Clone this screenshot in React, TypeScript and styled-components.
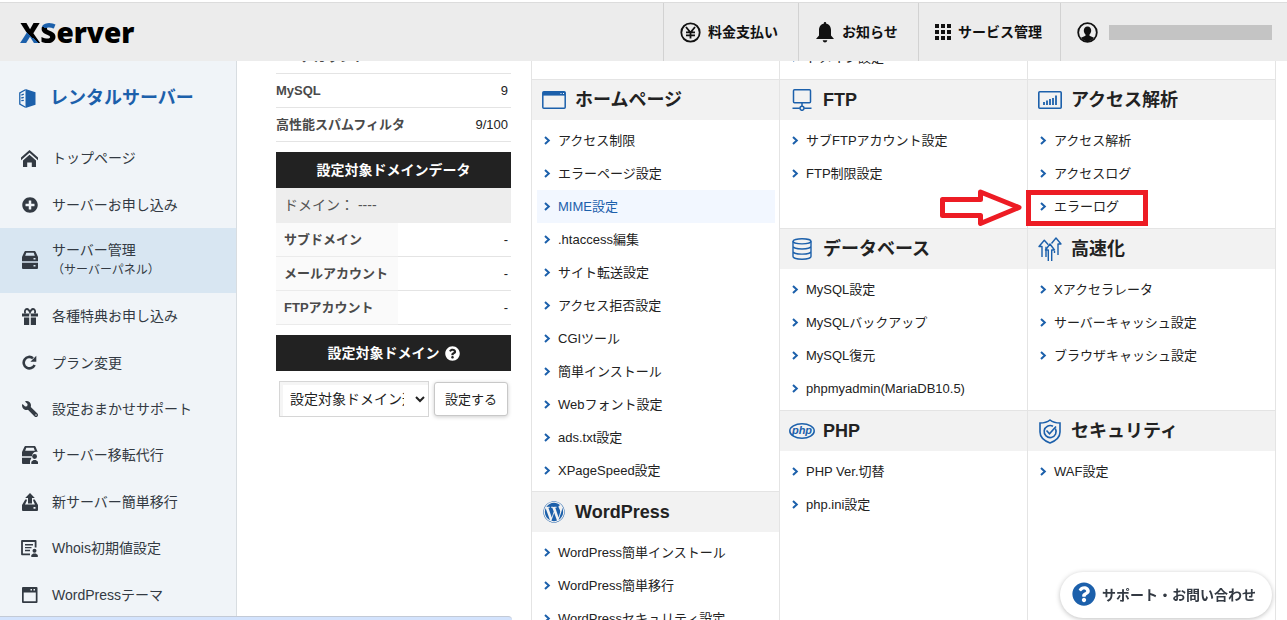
import React from "react";
import styled, { createGlobalStyle } from "styled-components";
import { FaPlusCircle, FaQuestionCircle, FaWordpress, FaWrench } from "react-icons/fa";

const blue = "#1c60ab";
const ink = "#222222";
const navInk = "#333a43";
const line = "#e4e4e4";

const GlobalStyle = createGlobalStyle`
  *, *::before, *::after { box-sizing: border-box; }
  body {
    margin: 0;
    background: #fff;
    color: ${ink};
    font-family: "Liberation Sans", "Noto Sans CJK JP", sans-serif;
    font-size: 13px;
    line-height: 20px;
  }
  a { color: inherit; text-decoration: none; }
  ul { margin: 0; padding: 0; list-style: none; }
  h2, h3 { margin: 0; }
  svg { display: block; flex: none; }
`;

const Page = styled.div`
  display: flex;
  flex-direction: column;
  height: 100vh;
  overflow: hidden;
  padding-top: 2px;
`;

/* ---------- header ---------- */

const Header = styled.header`
  flex: none;
  display: flex;
  justify-content: space-between;
  height: 59px;
  border-top: 1px solid #dcdcdc;
  background: #ececec;
`;

const Logo = styled.a`
  display: flex;
  align-items: center;
  padding-left: 20px;
  color: #000;
  font-family: "Open Sans", sans-serif;
  font-size: 28px;
  font-weight: 800;
  line-height: 40px;
`;

const LogoTint = styled.span<{ $from: string; $to: string }>`
  background: linear-gradient(${(p) => p.$from}, ${blue} ${(p) => p.$to}, #000 ${(p) => p.$to});
  background-clip: text;
  -webkit-background-clip: text;
  color: transparent;
`;

const HeaderNav = styled.nav`
  display: flex;
`;

const HeaderItem = styled.a<{ $width: number }>`
  display: flex;
  align-items: center;
  gap: 7px;
  width: ${(p) => p.$width}px;
  padding: 0 15px 0 16px;
  border-left: 1px solid #d2d2d2;
  color: #111;
  font-size: 14px;
  font-weight: 700;
  white-space: nowrap;
`;

const UserName = styled.span`
  flex: 1;
  height: 15px;
  margin-left: 4px;
  background: #c4c4c4;
`;

/* ---------- sidebar ---------- */

const Body = styled.div`
  flex: 1;
  display: flex;
  min-height: 0;
`;

const Sidebar = styled.aside`
  flex: none;
  display: flex;
  flex-direction: column;
  width: 237px;
  padding-bottom: 2px;
  border-right: 1px solid #d8dde1;
  background: #f0f4f8;
  color: ${navInk};
`;

const SidebarTitle = styled.h2`
  flex: none;
  display: flex;
  align-items: center;
  gap: 14px;
  height: 74px;
  padding-left: 19px;
  color: ${blue};
  font-size: 18px;
  line-height: 24px;
`;

const NavList = styled.ul`
  flex: 1;
  display: flex;
  flex-direction: column;
`;

const NavItem = styled.li<{ $active?: boolean }>`
  flex: ${(p) => (p.$active ? "none" : "1 0 40px")};
  display: flex;
  height: ${(p) => (p.$active ? "65px" : "auto")};
  max-height: 65px;
  background: ${(p) => (p.$active ? "#d8e6f2" : "transparent")};
`;

const NavLink = styled.a`
  flex: 1;
  display: flex;
  align-items: center;
  gap: 14px;
  padding-left: 21px;
  font-size: 14px;
`;

const NavIcon = styled.span`
  display: flex;
  justify-content: center;
  width: 17px;
`;

const NavNote = styled.small`
  display: block;
  font-size: 12px;
`;

/* ---------- main ---------- */

const Main = styled.main`
  flex: 1;
  min-width: 0;
  overflow: hidden;
`;

const Scrolled = styled.div`
  display: flex;
  align-items: flex-start;
  gap: 20px;
  margin-top: -24px;
  padding: 0 11px 0 39px;
`;

const Stats = styled.section`
  flex: none;
  width: 235px;
  padding-top: 3px;
`;

const DataTable = styled.table`
  width: 100%;
  border-collapse: separate;
  border-spacing: 0;
`;

const LabelCell = styled.th<{ $shaded?: boolean }>`
  width: ${(p) => (p.$shaded ? "122px" : "auto")};
  height: 34px;
  padding: 0 0 0 ${(p) => (p.$shaded ? 8 : 0)}px;
  border-bottom: 1px solid ${(p) => (p.$shaded ? "#ebebeb" : line)};
  background: ${(p) => (p.$shaded ? "#fafafa" : "#fff")};
  color: #4a4a4a;
  text-align: left;
  white-space: nowrap;
`;

const ValueCell = styled.td`
  padding: 0 3px 0 0;
  border-bottom: 1px solid ${line};
  text-align: right;
`;

const DarkTitle = styled.h3`
  display: flex;
  align-items: center;
  justify-content: center;
  gap: 5px;
  height: 36px;
  margin-top: 10px;
  background: #222;
  color: #fff;
  font-size: 14px;
`;

const DomainRow = styled.div`
  padding: 7px 8px 8px;
  background: #ededed;
  color: #555;
  font-size: 14px;
`;

const DomainForm = styled.form`
  display: flex;
  align-items: center;
  gap: 5px;
  padding: 10px 3px;
`;

const SelectWrap = styled.label`
  flex: 1;
  display: grid;
  align-items: center;
  & > * { grid-area: 1 / 1; }
  & > svg { justify-self: end; margin-right: 4px; pointer-events: none; }
`;

const DomainSelect = styled.select`
  appearance: none;
  width: 100%;
  height: 36px;
  padding: 0 24px 0 10px;
  border: 1px solid #d6d6d6;
  border-radius: 0;
  background: #fff;
  box-shadow: inset 3px 3px 0 #f5f5f5;
  color: ${ink};
  font-family: inherit;
  font-size: 14px;
`;

const SubmitButton = styled.button`
  width: 74px;
  height: 34px;
  padding: 0 0 2px;
  border: 1px solid #c8c8c8;
  border-radius: 3px;
  background: #fff;
  box-shadow: 0 1px 4px rgba(0, 0, 0, 0.2);
  color: ${ink};
  font-family: inherit;
  font-size: 13px;
`;

const Panel = styled.div`
  flex: 1;
  display: flex;
  min-width: 0;
  border-right: 1px solid ${line};
`;

const PairGrid = styled.div`
  flex: 2;
  display: grid;
  grid-template-columns: 1fr 1fr;
  grid-template-rows: auto auto auto 1fr;
  min-width: 0;
`;

const Section = styled.section`
  border-left: 1px solid ${line};
  border-bottom: 1px solid ${line};
`;

const SectionTitle = styled.h3`
  display: flex;
  align-items: center;
  gap: 8px;
  height: 40px;
  padding-left: 9px;
  background: #f2f2f2;
  font-size: 18px;
  line-height: 24px;
  white-space: nowrap;
`;

const SectionIcon = styled.span`
  display: flex;
  justify-content: center;
  width: 26px;
  color: ${blue};
`;

const LinkList = styled.ul`
  min-height: 42px;
  padding: 4px 4px 5px 5px;
`;

const Column = styled.div`
  flex: 1;
  min-width: 0;
  ${LinkList} { padding-bottom: 4px; }
`;

const LinkItem = styled.li`
  position: relative;
`;

const MenuLink = styled.a<{ $active?: boolean }>`
  display: flex;
  align-items: center;
  gap: 7px;
  height: 33px;
  padding-left: 7px;
  background: ${(p) => (p.$active ? "#f2f7ff" : "transparent")};
  color: ${(p) => (p.$active ? blue : ink)};
  white-space: nowrap;
`;

/* ---------- overlays ---------- */

const Highlight = styled.span`
  position: absolute;
  top: 0;
  left: -7px;
  width: 122px;
  height: 36px;
  border: 5px solid #ed1c24;
  pointer-events: none;
`;

const Arrow = styled.svg`
  position: absolute;
  top: -1px;
  left: -93px;
  pointer-events: none;
`;

const SupportButton = styled.button`
  position: fixed;
  right: 15px;
  bottom: 2px;
  display: flex;
  align-items: center;
  gap: 6px;
  height: 46px;
  padding: 0 16px 2px 12px;
  border: 0;
  border-radius: 23px;
  background: #fff;
  box-shadow: 0 1px 5px rgba(0, 0, 0, 0.25);
  color: ${navInk};
  font-family: inherit;
  font-size: 14px;
  font-weight: 700;
  white-space: nowrap;
`;

const StatusBar = styled.div`
  position: fixed;
  bottom: 0;
  left: 0;
  width: 512px;
  height: 4px;
  border-top: 1px solid #c3cad6;
  border-top-right-radius: 4px;
  background: #d3e3fd;
`;

/* ---------- icons ---------- */

const Chevron = () => (
  <svg width="7" height="9" viewBox="0 0 7 9" fill="none" stroke={blue} strokeWidth="2">
    <path d="M1 1l3.8 3.5L1 8" />
  </svg>
);

const YenIcon = () => (
  <svg width="21" height="21" viewBox="0 0 21 21" fill="none" stroke="#111" strokeWidth="1.8">
    <circle cx="10.5" cy="10.5" r="9.2" />
    <path d="M6 5l4.5 5.5L15 5M10.5 10v6.500M6 10.300h9M6 13.300h9" />
  </svg>
);

const BellIcon = () => (
  <svg width="20" height="21" viewBox="-1 0 20 21" fill="#111">
    <path d="M9 0c.9 0 1.3.7 1.3 1.700C13.600 2.300 15 5 15 8v5.500l3 3.500H0l3-3.500V8c0-3 1.400-5.700 4.700-6.300C7.700.7 8.100 0 9 0zM6.700 18.300h4.600c-.3 1.400-1.200 2.200-2.300 2.200s-2-.8-2.300-2.200z" />
  </svg>
);

const AppsIcon = () => (
  <svg width="16" height="16" viewBox="0 0 16 16" fill="#111">
    {[0, 6, 12].map((y) => [0, 6, 12].map((x) => <rect key={`${x}-${y}`} x={x} y={y} width="4" height="4" />))}
  </svg>
);

const UserIcon = () => (
  <svg width="21" height="21" viewBox="0 0 21 21">
    <circle cx="10.500" cy="10.500" r="9.300" fill="none" stroke="#111" strokeWidth="1.800" />
    <path fill="#111" d="M10.500 4.500c2.400 0 3.700 1.700 3.700 4 0 1.800-.8 3.200-1.700 4v1.300l4.500 2c-1.600 2.200-3.900 3.400-6.500 3.400S5.600 18 4 15.800l4.500-2v-1.300c-.9-.8-1.700-2.200-1.700-4 0-2.300 1.300-4 3.700-4z" />
  </svg>
);

const RentalIcon = () => (
  <svg width="17" height="19" viewBox="0 0 17 19">
    <path fill={blue} d="M6.500 0L16.500 3.300v12.400L6.500 19z" />
    <path fill="none" stroke={blue} strokeWidth="1.300" d="M6.500 .8L.8 4v11l5.700 3.200" />
    <path fill="none" stroke={blue} strokeWidth="1.300" d="M2.300 6.200l2.500-1M2.300 9l2.500-.7M2.300 11.600l2.500-.3" />
  </svg>
);

const HomeIcon = () => (
  <svg width="17" height="17" viewBox="0 0 17 17" fill={navInk}>
    <path d="M8.500 0L17 7.500v2.700L8.500 2.800 0 10.200V7.500z" />
    <path d="M8.500 4.800L15 10.500V17h-4.200v-4.500H6.200V17H2v-6.500z" />
  </svg>
);

const ServerIcon = () => (
  <svg width="16" height="18" viewBox="0 0 16 18" fill={navInk}>
    <path fillRule="evenodd" d="M4 0h8c1 0 1.500.4 1.800 1.200L16 6v4.300H0V6l2.200-4.800C2.500.4 3 0 4 0zm.3 1.700L3.200 4.700h9.600l-1.100-3zM11.500 7v1.500h2V7z" />
    <path fillRule="evenodd" d="M0 11.700h16V17a1 1 0 0 1-1 1H1a1 1 0 0 1-1-1zm11.500 2.300v1.600h2V14z" />
  </svg>
);

const GiftIcon = () => (
  <svg width="16" height="17" viewBox="0 0 16 17" fill={navInk}>
    <path d="M2 9.500h5.200V17H2zM8.800 9.500H14V17H8.800zM0 5.500h7.200V8.500H0zM8.800 5.500H16V8.500H8.800z" />
    <path fill="none" stroke={navInk} strokeWidth="1.800" d="M3.200 5.500C2.300 2.500 3.500.9 5 1c1.500.2 2.400 1.700 3 3.300C8.600 2.700 9.500 1.200 11 1c1.500-.1 2.700 1.500 1.800 4.500" />
  </svg>
);

const ReloadIcon = () => (
  <svg width="15" height="15" viewBox="0 0 15 15">
    <path fill="none" stroke={navInk} strokeWidth="2.600" d="M12.600 10A5.700 5.700 0 1 1 11 3.200" />
    <path fill={navInk} d="M14.300.8v5.900H8.400z" />
  </svg>
);

const ServerUserIcon = () => (
  <svg width="16" height="18" viewBox="0 0 16 18" fill={navInk}>
    <path fillRule="evenodd" d="M4 0h8c1 0 1.500.4 1.800 1.200L15.700 6c-3-.8-5.400.8-5.700 4.300H0V6l2.200-4.800C2.500.4 3 0 4 0zm.3 1.700L3.200 4.700h9.600l-1.100-3z" />
    <path d="M0 11.700h9.500L8 15v3H1a1 1 0 0 1-1-1z" />
    <circle cx="12.600" cy="10.500" r="2.400" />
    <path d="M9.300 18v-2.200l2.200-1.800h2.300l2.200 1.800V18z" />
  </svg>
);

const UploadIcon = () => (
  <svg width="16" height="18" viewBox="0 0 16 18" fill={navInk}>
    <path d="M8 0l4.800 5H10v5.500H6V5H3.200z" />
    <path d="M3.300 6.500h1.500v1.300L3 11.500h10l-1.800-3.700V6.500h1.500L16 12H0z" />
    <path fillRule="evenodd" d="M0 12h16v5a1 1 0 0 1-1 1H1a1 1 0 0 1-1-1zm11.500 2v1.800h2V14z" />
  </svg>
);

const WhoisIcon = () => (
  <svg width="17" height="17" viewBox="0 0 17 17">
    <path fill="none" stroke={navInk} strokeWidth="1.800" strokeLinejoin="round" d="M9 14.300H1V1h13.600v6.500" />
    <path fill="none" stroke={navInk} strokeWidth="1.400" d="M4 4.800h8M4 7.600h6.500M4 10.500h5" />
    <circle cx="13.500" cy="10.800" r="2" fill={navInk} />
    <path fill={navInk} d="M10.300 17v-2l2-1.600h2.500l2 1.600v2z" />
  </svg>
);

const ThemeIcon = () => (
  <svg width="16" height="16" viewBox="0 0 16 16" fill={navInk}>
    <path fillRule="evenodd" d="M1 0h13.500a1 1 0 0 1 1 1v14a1 1 0 0 1-1 1H1a1 1 0 0 1-1-1V1a1 1 0 0 1 1-1zm.7 5.500v8.800h12.100V5.500zM8.500 2v1.500H10V2zm3 0v1.500H13V2z" />
  </svg>
);

const WindowIcon = () => (
  <svg width="24" height="18" viewBox="0 0 24 18">
    <rect x=".8" y=".8" width="22.400" height="16.400" rx="1" fill="none" stroke={blue} strokeWidth="1.500" />
    <path fill={blue} d="M1 1h22v3.600H1z" />
    <path fill="#fff" d="M18.500 2h1v1h-1zM21 2h1v1h-1z" />
  </svg>
);

const FtpIcon = () => (
  <svg width="20" height="22" viewBox="0 0 20 22" fill="none" stroke={blue} strokeWidth="1.500">
    <rect x="1.500" y=".8" width="17" height="13" rx="1" />
    <path d="M10 14v3.300M.5 19.300h7.300M12.200 19.300h7.300" />
    <circle cx="10" cy="19.300" r="2" />
  </svg>
);

const ChartIcon = () => (
  <svg width="24" height="18" viewBox="0 0 24 18" fill="none" stroke={blue}>
    <rect x=".8" y=".8" width="22.400" height="16.400" rx="1" strokeWidth="1.600" />
    <path strokeWidth="1.800" d="M6 14v-3M9 14V9.500M12 14V8M15 14V7M18 14V4.500" />
  </svg>
);

const DatabaseIcon = () => (
  <svg width="20" height="22" viewBox="0 0 20 22" fill="none" stroke={blue} strokeWidth="1.400">
    <ellipse cx="10" cy="3.300" rx="9" ry="2.600" />
    <path d="M1 3.300v15.200c0 1.500 4 2.700 9 2.700s9-1.200 9-2.700V3.300M1 8.300c0 1.500 4 2.700 9 2.700s9-1.200 9-2.700M1 13.400c0 1.500 4 2.700 9 2.700s9-1.200 9-2.700" />
  </svg>
);

const SpeedIcon = () => (
  <svg width="24" height="25" viewBox="0 0 24 25" fill="none" stroke={blue} strokeWidth="1.400">
    <path d="M4 20V9.500H1l5.300-6.300 4 4.600M8 9.700V20" strokeLinejoin="round" />
    <path d="M10.300 24V13H7.500L12 7l4.500 6h-2.800v11" strokeLinejoin="round" />
    <path d="M13.500 6.500L18 1l5 6h-3v11M16.500 16V14" strokeLinejoin="round" />
  </svg>
);

const PhpIcon = () => (
  <svg width="26" height="16" viewBox="0 0 26 16">
    <ellipse cx="13" cy="8" rx="12.200" ry="7.200" fill="none" stroke={blue} strokeWidth="1.500" />
    <text x="13" y="11" textAnchor="middle" fill={blue} fontFamily="Liberation Sans, sans-serif" fontSize="11" fontStyle="italic" fontWeight="700">
      php
    </text>
  </svg>
);

const ShieldIcon = () => (
  <svg width="22" height="25" viewBox="0 0 22 25" fill="none" stroke={blue} strokeWidth="1.600">
    <path d="M11 1c2.500 2 6 3 10 3v9c0 5-4 8.700-10 11C5 21.700 1 18 1 13V4c4 0 7.500-1 10-3z" />
    <path d="M16.300 9.500A6 6 0 1 1 14 7.300" />
    <path d="M7.500 11.500l3 3.200L17 7.500" />
  </svg>
);

/* ---------- data ---------- */

const headerItems = [
  { label: "料金支払い", icon: <YenIcon />, width: 135 },
  { label: "お知らせ", icon: <BellIcon />, width: 120 },
  { label: "サービス管理", icon: <AppsIcon />, width: 142 },
];

const navItems: { label: string; note?: string; icon: React.ReactNode }[] = [
  { label: "トップページ", icon: <HomeIcon /> },
  { label: "サーバーお申し込み", icon: <FaPlusCircle size={16} /> },
  { label: "サーバー管理", note: "（サーバーパネル）", icon: <ServerIcon /> },
  { label: "各種特典お申し込み", icon: <GiftIcon /> },
  { label: "プラン変更", icon: <ReloadIcon /> },
  { label: "設定おまかせサポート", icon: <FaWrench size={16} style={{ transform: "scaleX(-1)" }} /> },
  { label: "サーバー移転代行", icon: <ServerUserIcon /> },
  { label: "新サーバー簡単移行", icon: <UploadIcon /> },
  { label: "Whois初期値設定", icon: <WhoisIcon /> },
  { label: "WordPressテーマ", icon: <ThemeIcon /> },
];

const serverRows = [
  ["FTPアカウント", ""],
  ["MySQL", "9"],
  ["高性能スパムフィルタ", "9/100"],
];

const domainRows = ["サブドメイン", "メールアカウント", "FTPアカウント"];

type MenuSection = { title?: string; icon?: React.ReactNode; links: string[] };

const siteSections: MenuSection[] = [
  { links: [] },
  {
    title: "ホームページ",
    icon: <WindowIcon />,
    links: [
      "アクセス制限",
      "エラーページ設定",
      "MIME設定",
      ".htaccess編集",
      "サイト転送設定",
      "アクセス拒否設定",
      "CGIツール",
      "簡単インストール",
      "Webフォント設定",
      "ads.txt設定",
      "XPageSpeed設定",
    ],
  },
  {
    title: "WordPress",
    icon: <FaWordpress size={22} />,
    links: ["WordPress簡単インストール", "WordPress簡単移行", "WordPressセキュリティ設定"],
  },
];

const pairedSections: MenuSection[] = [
  { links: ["ドメイン設定"] },
  { links: [] },
  { title: "FTP", icon: <FtpIcon />, links: ["サブFTPアカウント設定", "FTP制限設定"] },
  { title: "アクセス解析", icon: <ChartIcon />, links: ["アクセス解析", "アクセスログ", "エラーログ"] },
  {
    title: "データベース",
    icon: <DatabaseIcon />,
    links: ["MySQL設定", "MySQLバックアップ", "MySQL復元", "phpmyadmin(MariaDB10.5)"],
  },
  {
    title: "高速化",
    icon: <SpeedIcon />,
    links: ["Xアクセラレータ", "サーバーキャッシュ設定", "ブラウザキャッシュ設定"],
  },
  { title: "PHP", icon: <PhpIcon />, links: ["PHP Ver.切替", "php.ini設定"] },
  { title: "セキュリティ", icon: <ShieldIcon />, links: ["WAF設定"] },
];

const MenuBlock = ({ title, icon, links }: MenuSection) => (
  <Section>
    {title && (
      <SectionTitle>
        <SectionIcon>{icon}</SectionIcon>
        {title}
      </SectionTitle>
    )}
    <LinkList>
      {links.map((label) => (
        <LinkItem key={label}>
          <MenuLink href="#" $active={label === "MIME設定"}>
            <Chevron />
            {label}
          </MenuLink>
          {label === "エラーログ" && (
            <>
              <Highlight />
              <Arrow width="82" height="38" viewBox="0 0 82 38" fill="#fff" stroke="#ed1c24" strokeWidth="5" strokeLinejoin="round">
                <path d="M2.500 10.500h38V3L79 18.500 40.500 34.500V26.500h-38z" />
              </Arrow>
            </>
          )}
        </LinkItem>
      ))}
    </LinkList>
  </Section>
);

export default function App() {
  return (
    <Page>
      <GlobalStyle />
      <Header>
        <Logo href="#" aria-label="XServer">
          <LogoTint $from="40deg" $to="44%">X</LogoTint>
          <LogoTint $from="195deg" $to="42%">S</LogoTint>
          erver
        </Logo>
        <HeaderNav>
          {headerItems.map((item) => (
            <HeaderItem key={item.label} href="#" $width={item.width}>
              {item.icon}
              {item.label}
            </HeaderItem>
          ))}
          <HeaderItem href="#" $width={227} aria-label="アカウント">
            <UserIcon />
            <UserName />
          </HeaderItem>
        </HeaderNav>
      </Header>

      <Body>
        <Sidebar>
          <SidebarTitle>
            <RentalIcon />
            レンタルサーバー
          </SidebarTitle>
          <NavList>
            {navItems.map((item) => (
              <NavItem key={item.label} $active={!!item.note}>
                <NavLink href="#">
                  <NavIcon>{item.icon}</NavIcon>
                  <span>
                    {item.label}
                    {item.note && <NavNote>{item.note}</NavNote>}
                  </span>
                </NavLink>
              </NavItem>
            ))}
          </NavList>
        </Sidebar>

        <Main>
          <Scrolled>
            <Stats>
              <DataTable>
                <tbody>
                  {serverRows.map(([label, value]) => (
                    <tr key={label}>
                      <LabelCell scope="row">{label}</LabelCell>
                      <ValueCell>{value}</ValueCell>
                    </tr>
                  ))}
                </tbody>
              </DataTable>
              <DarkTitle>設定対象ドメインデータ</DarkTitle>
              <DomainRow>ドメイン： ----</DomainRow>
              <DataTable>
                <tbody>
                  {domainRows.map((label) => (
                    <tr key={label}>
                      <LabelCell scope="row" $shaded>
                        {label}
                      </LabelCell>
                      <ValueCell>-</ValueCell>
                    </tr>
                  ))}
                </tbody>
              </DataTable>
              <DarkTitle>
                設定対象ドメイン
                <FaQuestionCircle size={15} />
              </DarkTitle>
              <DomainForm onSubmit={(e) => e.preventDefault()}>
                <SelectWrap>
                  <DomainSelect aria-label="設定対象ドメイン">
                    <option>設定対象ドメイン選択</option>
                  </DomainSelect>
                  <svg width="10" height="7" viewBox="0 0 10 7" fill="none" stroke="#222" strokeWidth="2">
                    <path d="M1 1l4 4 4-4" />
                  </svg>
                </SelectWrap>
                <SubmitButton type="submit">設定する</SubmitButton>
              </DomainForm>
            </Stats>

            <Panel>
              <Column>
                {siteSections.map((section, i) => (
                  <MenuBlock key={i} {...section} />
                ))}
              </Column>
              <PairGrid>
                {pairedSections.map((section, i) => (
                  <MenuBlock key={i} {...section} />
                ))}
              </PairGrid>
            </Panel>
          </Scrolled>
        </Main>
      </Body>

      <StatusBar />
      <SupportButton type="button">
        <FaQuestionCircle size={24} color={blue} />
        サポート・お問い合わせ
      </SupportButton>
    </Page>
  );
}
